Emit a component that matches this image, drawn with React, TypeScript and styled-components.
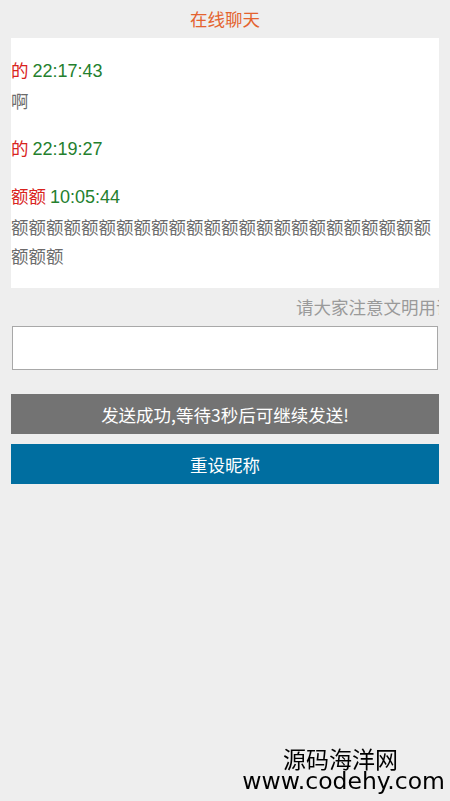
import React from 'react';
import styled, { createGlobalStyle } from 'styled-components';

const GlobalStyle = createGlobalStyle`
  html, body {
    margin: 0;
    padding: 0;
    background: #eeeeee;
    font-family: "Noto Sans CJK SC", "Liberation Sans", sans-serif;
  }
`;

interface Message {
  name: string;
  time: string;
  text: string;
}

const MESSAGES: Message[] = [
  { name: '的', time: '22:17:43', text: '啊' },
  { name: '的', time: '22:19:27', text: '' },
  { name: '额额', time: '10:05:44', text: '额'.repeat(27) },
];

const Page = styled.div`
  padding: 0 11px;
  font-size: 17.5px;
`;

const Title = styled.div`
  height: 38px;
  line-height: 38px;
  text-align: center;
  color: #e4632e;
`;

const ChatBox = styled.div`
  height: 250px;
  background: #ffffff;
  overflow: hidden;
`;

const Item = styled.div`
  margin-top: 17px;

  &:first-child {
    margin-top: 16px;
  }
`;

const NameLine = styled.div`
  height: 31px;
  line-height: 31px;
`;

const Name = styled.span`
  color: #d9231d;
`;

const Time = styled.span`
  color: #24802e;
  font-family: "Liberation Sans", sans-serif;
  font-size: 18px;
  line-height: 1;
`;

const Text = styled.div`
  margin-top: 1px;
  line-height: 29px;
  color: #6b6b6b;
  word-break: break-all;
`;

const Notice = styled.div`
  height: 38px;
  line-height: 38px;
  overflow: hidden;
  white-space: nowrap;
  color: #9a9a9a;
  font-size: 17.5px;
`;

const Scroll = styled.span`
  display: inline-block;
  padding-left: 285px;
`;

const Input = styled.input`
  display: block;
  box-sizing: border-box;
  width: 426px;
  height: 44px;
  margin: 0 1px;
  border: 1px solid #a8a8a8;
  background: #ffffff;
  outline: none;
`;

const Button = styled.button<{ $bg: string }>`
  display: block;
  width: 100%;
  height: 40px;
  border: none;
  padding: 0;
  background: ${(p) => p.$bg};
  color: #ffffff;
  font-family: inherit;
  font-size: 17.5px;
  text-align: center;
`;

const Buttons = styled.div`
  display: flex;
  flex-direction: column;
  gap: 10px;
  margin-top: 24px;
`;

const Watermark = styled.div`
  position: fixed;
  right: 5px;
  bottom: 8px;
  text-align: center;
  color: #000000;
`;

const MarkName = styled.div`
  font-size: 23px;
  line-height: 23px;
  padding-right: 6px;
`;

const MarkUrl = styled.div`
  font-family: "DejaVu Sans", sans-serif;
  font-size: 23.5px;
  line-height: 23px;
`;

export default function App() {
  return (
    <>
      <GlobalStyle />
      <Page>
        <Title>在线聊天</Title>
        <ChatBox>
          {MESSAGES.map((m, i) => (
            <Item key={i}>
              <NameLine>
                <Name>{m.name}</Name> <Time>{m.time}</Time>
              </NameLine>
              {m.text && <Text>{m.text}</Text>}
            </Item>
          ))}
        </ChatBox>
        <Notice>
          <Scroll>请大家注意文明用语</Scroll>
        </Notice>
        <Input />
        <Buttons>
          <Button $bg="#737373">发送成功,等待3秒后可继续发送!</Button>
          <Button $bg="#006ea0">重设昵称</Button>
        </Buttons>
      </Page>
      <Watermark>
        <MarkName>源码海洋网</MarkName>
        <MarkUrl>www.codehy.com</MarkUrl>
      </Watermark>
    </>
  );
}
